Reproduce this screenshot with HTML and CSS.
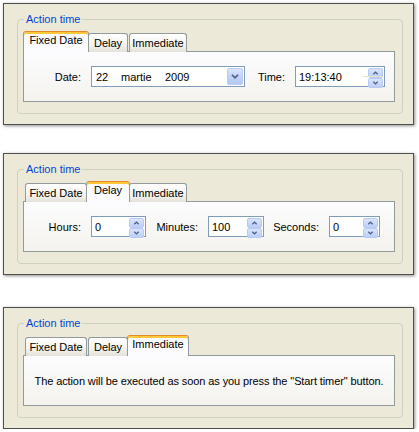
FILE: index.html
```html
<!DOCTYPE html>
<html>
<head>
<meta charset="utf-8">
<link rel="stylesheet" href="styles.css">
</head>
<body>
<div class="page">

  <section class="win win-1">
    <fieldset class="group">
      <legend class="group-title">Action time</legend>
      <div class="tab-strip">
        <div class="tab tab-fixed active">Fixed Date</div>
        <div class="tab tab-delay">Delay</div>
        <div class="tab tab-imm">Immediate</div>
      </div>
      <div class="tab-page">
        <span class="lbl lbl-date">Date:</span>
        <div class="field field-date">
          <span class="dpart dpart-day">22</span><span class="dpart dpart-month">martie</span><span class="dpart">2009</span>
          <span class="drop-btn"><svg width="16" height="15" viewBox="0 0 16 15"><path d="M4.5 5.5 L8 9 L11.5 5.5" fill="none" stroke="#4d6185" stroke-width="2"/></svg></span>
        </div>
        <span class="lbl lbl-time">Time:</span>
        <div class="field field-time">
          <span class="val">19:13:40</span>
          <span class="glint"></span>
          <span class="spin">
            <span class="spin-half"><svg width="15" height="8" viewBox="0 0 15 8"><path d="M5 5.5 L7.5 3 L10 5.5" fill="none" stroke="#4d6185" stroke-width="1.6"/></svg></span>
            <span class="spin-half"><svg width="15" height="8" viewBox="0 0 15 8"><path d="M5 2.5 L7.5 5 L10 2.5" fill="none" stroke="#4d6185" stroke-width="1.6"/></svg></span>
          </span>
        </div>
      </div>
    </fieldset>
  </section>

  <section class="win win-2">
    <fieldset class="group">
      <legend class="group-title">Action time</legend>
      <div class="tab-strip">
        <div class="tab tab-fixed">Fixed Date</div>
        <div class="tab tab-delay active">Delay</div>
        <div class="tab tab-imm">Immediate</div>
      </div>
      <div class="tab-page">
        <span class="lbl lbl-hours">Hours:</span>
        <div class="field field-hours">
          <span class="val">0</span>
          <span class="spin">
            <span class="spin-half"><svg width="15" height="8" viewBox="0 0 15 8"><path d="M5 5.5 L7.5 3 L10 5.5" fill="none" stroke="#4d6185" stroke-width="1.6"/></svg></span>
            <span class="spin-half"><svg width="15" height="8" viewBox="0 0 15 8"><path d="M5 2.5 L7.5 5 L10 2.5" fill="none" stroke="#4d6185" stroke-width="1.6"/></svg></span>
          </span>
        </div>
        <span class="lbl lbl-minutes">Minutes:</span>
        <div class="field field-minutes">
          <span class="val">100</span>
          <span class="spin">
            <span class="spin-half"><svg width="15" height="8" viewBox="0 0 15 8"><path d="M5 5.5 L7.5 3 L10 5.5" fill="none" stroke="#4d6185" stroke-width="1.6"/></svg></span>
            <span class="spin-half"><svg width="15" height="8" viewBox="0 0 15 8"><path d="M5 2.5 L7.5 5 L10 2.5" fill="none" stroke="#4d6185" stroke-width="1.6"/></svg></span>
          </span>
        </div>
        <span class="lbl lbl-seconds">Seconds:</span>
        <div class="field field-seconds">
          <span class="val">0</span>
          <span class="spin">
            <span class="spin-half"><svg width="15" height="8" viewBox="0 0 15 8"><path d="M5 5.5 L7.5 3 L10 5.5" fill="none" stroke="#4d6185" stroke-width="1.6"/></svg></span>
            <span class="spin-half"><svg width="15" height="8" viewBox="0 0 15 8"><path d="M5 2.5 L7.5 5 L10 2.5" fill="none" stroke="#4d6185" stroke-width="1.6"/></svg></span>
          </span>
        </div>
      </div>
    </fieldset>
  </section>

  <section class="win win-3">
    <fieldset class="group">
      <legend class="group-title">Action time</legend>
      <div class="tab-strip">
        <div class="tab tab-fixed">Fixed Date</div>
        <div class="tab tab-delay">Delay</div>
        <div class="tab tab-imm active">Immediate</div>
      </div>
      <div class="tab-page tab-page-text">
        <p class="note">The action will be executed as soon as you press the "Start timer" button.</p>
      </div>
    </fieldset>
  </section>

</div>
</body>
</html>
```

FILE: styles.css
```css
* { box-sizing: border-box; }

html, body {
  margin: 0;
  padding: 0;
  background: #ffffff;
}

body {
  font-family: "Liberation Sans", Arial, sans-serif;
  font-size: 11px;
  color: #000;
}

.page {
  display: flex;
  flex-direction: column;
}

.win {
  width: 411px;
  margin-left: 3px;
  background: #ece9d8;
  border: 1px solid #4f4f4f;
  box-shadow: 1px 1px 3px rgba(0, 0, 0, 0.45);
  padding: 8px 10px 10px 13px;
}

.win-1 { margin-top: 3px; }
.win-2 { margin-top: 28px; }
.win-3 { margin-top: 32px; }

.group {
  margin: 0;
  min-width: 0;
  border: 1px solid #d0d0bf;
  border-radius: 4px;
  padding: 5px 7px 11px 5px;
}

.group-title {
  margin-left: 1px;
  padding: 0 2px;
  line-height: 14px;
  color: #0046d5;
}

.tab-strip {
  display: flex;
  align-items: flex-end;
  padding-left: 2px;
  margin-bottom: -1px;
  height: 21px;
}

.tab {
  height: 19px;
  padding-top: 3px;
  line-height: 13px;
  text-align: center;
  border: 1px solid #919b9c;
  border-bottom: none;
  border-radius: 3px 3px 0 0;
  background: linear-gradient(#ffffff, #f3f2ec 60%, #e4e2d9);
  margin-right: 1px;
}

.tab-fixed { width: 62px; }
.tab-delay { width: 40px; }
.tab-imm { width: 58px; }

.tab.active {
  position: relative;
  z-index: 1;
  height: 21px;
  padding-top: 2px;
  margin-left: -2px;
  margin-right: -1px;
  border-top-color: #e68b2c;
  box-shadow: inset 0 2px 0 #ffc73c;
  background: #fcfcfe;
}

.tab-fixed.active { width: 66px; }
.tab-delay.active { width: 44px; }
.tab-imm.active { width: 62px; }

.tab-page {
  height: 51px;
  border: 1px solid #919b9c;
  background: linear-gradient(#fcfcfe, #f4f3ee);
  display: flex;
  align-items: center;
}

.lbl {
  text-align: right;
  margin-right: 10px;
  white-space: nowrap;
}

.lbl-date { width: 57px; }
.lbl-time { width: 40px; }
.lbl-hours { width: 57px; }
.lbl-minutes { width: 52px; }
.lbl-seconds { width: 55px; }

.field {
  position: relative;
  height: 21px;
  border: 1px solid #7f9db9;
  background: #ffffff;
  display: flex;
  align-items: center;
  padding-left: 3px;
}

.field-date { width: 154px; padding-left: 4px; }
.field-time { width: 90px; }
.field-hours { width: 55px; }
.field-minutes { width: 56px; }
.field-seconds { width: 51px; }

.dpart-day { width: 25px; }
.dpart-month { width: 44px; }

.val { flex: 1; }

.drop-btn {
  margin-left: auto;
  margin-right: 1px;
  width: 16px;
  height: 17px;
  border: 1px solid #b9cbf3;
  border-radius: 2px;
  background: linear-gradient(#d9e4fd, #c2d3fb 50%, #b4c8f6);
  display: flex;
  align-items: center;
  justify-content: center;
}

.drop-btn svg { display: block; }

.spin {
  margin-right: 1px;
  width: 15px;
  height: 17px;
  display: flex;
  flex-direction: column;
}

.spin-half {
  flex: 1;
  border: 1px solid #b9cbf3;
  border-radius: 2px;
  background: linear-gradient(#d9e4fd, #bccff9);
  display: flex;
  align-items: center;
  justify-content: center;
}

.spin-half svg { display: block; }

.glint {
  position: absolute;
  left: 67px;
  right: 2px;
  top: 9px;
  height: 1px;
  background: #e9e2c0;
  z-index: 1;
}

.tab-page-text {
  justify-content: center;
}

.note {
  margin: 0;
  text-align: center;
  white-space: nowrap;
  letter-spacing: -0.1px;
}
```
